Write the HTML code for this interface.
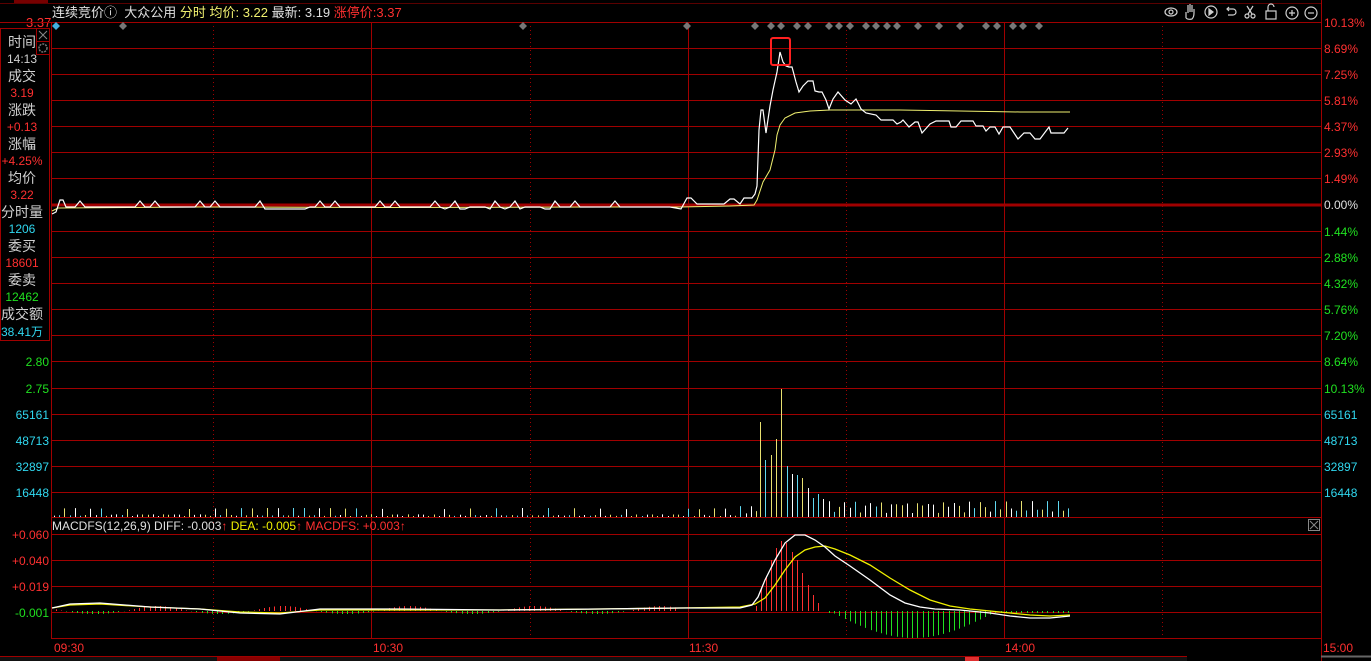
<!DOCTYPE html>
<html><head><meta charset="utf-8"><style>
html,body{margin:0;padding:0;background:#000;width:1371px;height:661px;overflow:hidden}
svg{display:block}
text{font-family:"Liberation Sans","Noto Sans CJK SC",sans-serif}
</style></head><body>
<svg id="s" width="1371" height="661" viewBox="0 0 1371 661" xmlns="http://www.w3.org/2000/svg">
<rect width="1371" height="661" fill="#000"/>
<line x1="0" y1="3.5" x2="1321" y2="3.5" stroke="#5a0000"/>
<rect x="14" y="0" width="34" height="3" fill="#700"/>
<text x="52" y="17" font-size="13" fill="#e0e0e0">连续竞价ⓘ&#160;&#160;大众公用 <tspan fill="#f0f070">分时 均价</tspan><tspan fill="#f0f070">: 3.22</tspan> 最新<tspan fill="#e0e0e0">: 3.19</tspan> <tspan fill="#ff3030">涨停价:3.37</tspan></text>
<text x="26" y="27" font-size="13" fill="#ff3030">3.37</text>
<g stroke="#d0d0d0" fill="none" stroke-width="1.2">
<ellipse cx="1171" cy="12" rx="6" ry="4"/><circle cx="1171" cy="12" r="2"/>
<path d="M1186 18 v-6 M1188 13 v-8 M1190 12 v-8 M1192 12 v-7 M1194 13 v-4 M1186 18 q2 2 6 1 q2-2 2-6"/>
<circle cx="1211" cy="12" r="6"/><path d="M1209 9 l4 3 -4 3z" fill="#d0d0d0"/>
<path d="M1227 9 h6 a3 3 0 0 1 0 6 h-5 M1229 7 l-2 2 2 2"/>
<circle cx="1247" cy="16" r="2"/><circle cx="1253" cy="16" r="2"/><path d="M1248 14 l5 -8 M1252 14 l-5 -8"/>
<rect x="1266" y="11" width="10" height="8"/><path d="M1268 11 v-4 a3 3 0 0 1 6 0"/>
<circle cx="1292" cy="13" r="6"/><path d="M1289 13 h6 M1292 10 v6"/>
<circle cx="1311" cy="13" r="6"/><path d="M1308 13 h6"/>
</g>
<rect x="0.5" y="28.5" width="49" height="312" fill="none" stroke="#a00000"/>
<rect x="36.5" y="28.5" width="13" height="13" fill="none" stroke="#a00000"/>
<path d="M39 31 l8 8 M47 31 l-8 8" stroke="#888"/>
<rect x="36.5" y="41.5" width="13" height="13" fill="none" stroke="#a00000"/>
<circle cx="43" cy="48" r="4" fill="none" stroke="#777" stroke-width="1.5" stroke-dasharray="2 1"/>
<g font-size="14" fill="#d0d0d0" text-anchor="middle">
<text x="22" y="47">时间</text><text x="22" y="81">成交</text><text x="22" y="115">涨跌</text><text x="22" y="149">涨幅</text><text x="22" y="183">均价</text><text x="22" y="217">分时量</text><text x="22" y="251">委买</text><text x="22" y="285">委卖</text><text x="22" y="319">成交额</text>
</g>
<g font-size="12" text-anchor="middle">
<text x="22" y="63" fill="#d0d0d0">14:13</text><text x="22" y="97" fill="#ff3030">3.19</text><text x="22" y="131" fill="#ff3030">+0.13</text><text x="22" y="165" fill="#ff3030">+4.25%</text><text x="22" y="199" fill="#ff3030">3.22</text><text x="22" y="233" fill="#30d8f0">1206</text><text x="22" y="267" fill="#ff3030">18601</text><text x="22" y="301" fill="#20e020">12462</text><text x="22" y="336" fill="#30d8f0">38.41万</text>
</g>
<g id="grid" stroke="#a00000" stroke-width="1"></g>
<line x1="51" y1="205" x2="1321" y2="205" stroke="#a00000" stroke-width="3"/>
<line x1="51.5" y1="22" x2="51.5" y2="638" stroke="#a00000"/>
<line x1="1321.5" y1="0" x2="1321.5" y2="661" stroke="#a00000"/>
<g stroke="#a00000" stroke-dasharray="1 3">
<line x1="213.5" y1="22" x2="213.5" y2="638"/><line x1="530.5" y1="22" x2="530.5" y2="638"/><line x1="846.5" y1="22" x2="846.5" y2="638"/><line x1="1162.5" y1="22" x2="1162.5" y2="638"/>
</g>
<g stroke="#a00000"><line x1="371.5" y1="22" x2="371.5" y2="638"/><line x1="688.5" y1="22" x2="688.5" y2="638"/><line x1="1004.5" y1="22" x2="1004.5" y2="638"/></g>
<g font-size="12">
<text x="1324" y="27" fill="#ff3030">10.13%</text><text x="1324" y="53" fill="#ff3030">8.69%</text><text x="1324" y="79" fill="#ff3030">7.25%</text><text x="1324" y="105" fill="#ff3030">5.81%</text><text x="1324" y="131" fill="#ff3030">4.37%</text><text x="1324" y="157" fill="#ff3030">2.93%</text><text x="1324" y="183" fill="#ff3030">1.49%</text><text x="1324" y="209" fill="#e0e0e0">0.00%</text>
<text x="1324" y="236" fill="#20e020">1.44%</text><text x="1324" y="262" fill="#20e020">2.88%</text><text x="1324" y="288" fill="#20e020">4.32%</text><text x="1324" y="314" fill="#20e020">5.76%</text><text x="1324" y="340" fill="#20e020">7.20%</text><text x="1324" y="366" fill="#20e020">8.64%</text><text x="1324" y="393" fill="#20e020">10.13%</text>
<text x="1324" y="419" fill="#30d8f0">65161</text><text x="1324" y="445" fill="#30d8f0">48713</text><text x="1324" y="471" fill="#30d8f0">32897</text><text x="1324" y="497" fill="#30d8f0">16448</text>
<text x="49" y="366" fill="#20e020" text-anchor="end">2.80</text><text x="49" y="393" fill="#20e020" text-anchor="end">2.75</text>
<text x="49" y="419" fill="#30d8f0" text-anchor="end">65161</text><text x="49" y="445" fill="#30d8f0" text-anchor="end">48713</text><text x="49" y="471" fill="#30d8f0" text-anchor="end">32897</text><text x="49" y="497" fill="#30d8f0" text-anchor="end">16448</text>
<text x="49" y="539" fill="#ff3030" text-anchor="end">+0.060</text><text x="49" y="565" fill="#ff3030" text-anchor="end">+0.040</text><text x="49" y="591" fill="#ff3030" text-anchor="end">+0.019</text><text x="49" y="617" fill="#20e020" text-anchor="end">-0.001</text>
<text x="54" y="652" fill="#ff3030">09:30</text><text x="373" y="652" fill="#ff3030">10:30</text><text x="689" y="652" fill="#ff3030">11:30</text><text x="1005" y="652" fill="#ff3030">14:00</text><text x="1323" y="652" fill="#ff3030">15:00</text>
<text x="52" y="530" fill="#e0e0e0">MACDFS(12,26,9) DIFF: -0.003<tspan fill="#ff3030">↑</tspan> <tspan fill="#f0f000">DEA: -0.005</tspan><tspan fill="#ff3030">↑ MACDFS: +0.003↑</tspan></text>
</g>
<rect x="1308.5" y="519.5" width="11" height="11" fill="none" stroke="#888"/><path d="M1310 521 l8 8 M1318 521 l-8 8" stroke="#888"/>
<g id="dia"></g>
<g id="vol"></g>
<g stroke-width="1">
<line x1="760.5" y1="422" x2="760.5" y2="517" stroke="#e8e070"/>
<line x1="765.5" y1="460" x2="765.5" y2="517" stroke="#60d8f0"/>
<line x1="771.5" y1="455" x2="771.5" y2="517" stroke="#e8e070"/>
<line x1="776.5" y1="439" x2="776.5" y2="517" stroke="#e8e070"/>
<line x1="781.5" y1="389" x2="781.5" y2="517" stroke="#e8e070"/>
<line x1="787.5" y1="466" x2="787.5" y2="517" stroke="#60d8f0"/>
<line x1="792.5" y1="474" x2="792.5" y2="517" stroke="#fff"/>
<line x1="797.5" y1="475" x2="797.5" y2="517" stroke="#60d8f0"/>
<line x1="802.5" y1="478" x2="802.5" y2="517" stroke="#e8e070"/>
<line x1="808.5" y1="488" x2="808.5" y2="517" stroke="#fff"/>
<line x1="813.5" y1="498" x2="813.5" y2="517" stroke="#60d8f0"/>
<line x1="818.5" y1="494" x2="818.5" y2="517" stroke="#60d8f0"/>
<line x1="823.5" y1="499" x2="823.5" y2="517" stroke="#fff"/>
</g>
<g id="mb"></g>
<g stroke="#ff3030">
<line x1="756.5" y1="606" x2="756.5" y2="611"/><line x1="761.5" y1="588" x2="761.5" y2="611"/><line x1="766.5" y1="576" x2="766.5" y2="611"/><line x1="771.5" y1="560" x2="771.5" y2="611"/><line x1="776.5" y1="548" x2="776.5" y2="611"/><line x1="781.5" y1="541" x2="781.5" y2="611"/><line x1="786.5" y1="543" x2="786.5" y2="611"/><line x1="792.5" y1="552" x2="792.5" y2="611"/><line x1="797.5" y1="560" x2="797.5" y2="611"/><line x1="802.5" y1="573" x2="802.5" y2="611"/><line x1="808.5" y1="585" x2="808.5" y2="611"/><line x1="813.5" y1="595" x2="813.5" y2="611"/><line x1="818.5" y1="603" x2="818.5" y2="611"/>
</g>
<polyline id="avg" fill="none" stroke="#f0f070" stroke-width="1"/>
<polyline id="price" fill="none" stroke="#fff" stroke-width="1.2"/>
<rect x="771" y="38" width="19" height="27" rx="2" fill="none" stroke="#ff2020" stroke-width="2"/>
<polyline fill="none" stroke="#f0f000" stroke-width="1.3" points="52,608 70,605 100,604 150,607 200,609 240,612 280,613 320,610 400,610 500,610 600,609 680,608 740,607 755,604 765,598 775,585 785,570 795,557 805,550 815,547 825,546 835,549 850,555 870,565 890,578 910,590 930,600 950,606 970,609 990,611 1010,613 1030,615 1050,616 1070,615"/>
<polyline fill="none" stroke="#fff" stroke-width="1.3" points="52,608 70,604 100,603 150,607 200,609 240,613 280,614 320,609 400,609 500,610 600,609 680,608 740,608 752,605 758,597 765,580 775,560 785,543 795,535 805,535 815,540 825,547 835,556 850,566 870,580 890,595 905,603 920,607 935,609 960,610 990,613 1010,616 1030,618 1050,618 1070,616"/>
<rect x="0" y="656" width="1187" height="5" fill="#111"/>
<line x1="0" y1="656.5" x2="1187" y2="656.5" stroke="#a00000"/>
<rect x="217" y="657" width="63" height="4" fill="#8a0000"/>
<rect x="965" y="657" width="14" height="4" fill="#e03030"/>
<line x1="1321" y1="656.5" x2="1371" y2="656.5" stroke="#666" stroke-width="2"/>
</svg>
<script>
var NS="http://www.w3.org/2000/svg";
function el(p,t,a){var e=document.createElementNS(NS,t);for(var k in a)e.setAttribute(k,a[k]);document.getElementById(p).appendChild(e);return e;}
[22,48,74,100,126,152,178,231,257,283,309,335,361,388,414,440,466,492,517,534,560,586,612,638].forEach(function(y){el('grid','line',{x1:51,y1:y+.5,x2:1321,y2:y+.5});});
el('grid','line',{x1:0,y1:22.5,x2:51,y2:22.5});
[123,523,687,755,771,781,797,808,829,839,850,866,876,887,897,918,939,960,986,997,1013,1023,1039].forEach(function(x){el('dia','path',{d:'M'+x+' 22 l4 4 -4 4 -4 -4z',fill:'#777'});});
el('dia','path',{d:'M56 22 l4 4 -4 4 -4 -4z',fill:'#40b0e0'});
var p=[[52,214],[56,212],[60,200],[63,200],[66,207]];
for(var i=0;i<121;i++){var px=70+i*5;var yy=207;var r=Math.sin(px*0.37)*Math.sin(px*0.053);if(r>0.55)yy=201;if(px>260&&px<310)yy=209;if(px>440&&px<560&&r<-0.3)yy=209;p.push([px,yy]);}
p=p.concat([[681,209],[687,198],[691,198],[697,204],[724,204],[730,199],[734,199],[740,204],[744,198],[752,198],[755,194],[757,186],[759,130],[761,110],[763,110],[766,133],[770,106],[773,90],[777,72],[780,52],[783,62],[786,66],[789,67],[792,67],[796,82],[799,92],[803,86],[808,81],[813,81],[815,91],[819,92],[822,92],[826,100],[829,109],[833,99],[838,92],[845,100],[851,104],[856,99],[861,109],[866,113],[876,115],[881,120],[893,120],[897,124],[901,122],[903,120],[909,127],[915,122],[918,122],[922,133],[930,124],[936,121],[949,121],[951,127],[956,127],[961,121],[973,121],[976,126],[983,126],[986,131],[990,127],[995,127],[999,134],[1003,127],[1010,127],[1018,139],[1024,133],[1030,133],[1035,139],[1040,139],[1046,131],[1049,127],[1051,133],[1059,133],[1064,133],[1068,128]]);
document.getElementById('price').setAttribute('points',p.map(function(a){return a.join(',')}).join(' '));
document.getElementById('avg').setAttribute('points','52,211 58,208 200,207 400,207.5 600,207 680,207 730,206 754,205 757,200 763,182 770,170 775,150 777,135 780,125 785,118 795,113 810,111 830,110 860,110 900,110 960,111 1020,112 1070,112');
var cols=['#fff','#60d8f0','#e8e070'];
for(var j=0;j<196;j++){var xi=Math.round(54+j*5.2);if(xi>=757&&xi<=826)continue;var r=(Math.sin(xi*1.7)+1)/2;var c=cols[Math.floor((Math.sin(xi*0.9)+1)*1.49)];var h;
 if(xi>826)h=517-(4+r*12);else if(xi>735)h=517-(3+r*8);else h=517-(1+(r>0.85?r*8:r*2));
 el('vol','line',{x1:xi+.5,y1:h,x2:xi+.5,y2:517,stroke:c});}
for(var j=0;j<47;j++){var xi=Math.round(829+j*5.2);var t=(xi-829)/240;var d=t<0.7?Math.sin(t/0.7*Math.PI)*27:2;el('mb','line',{x1:xi+.5,y1:611,x2:xi+.5,y2:611+Math.max(2,d),stroke:'#20e020'});}
for(var j=0;j<120;j++){var xi=Math.round(56+j*5.2);var r=Math.sin(xi*0.05);el('mb','line',{x1:xi+.5,y1:r>0?611-r*5:611,x2:xi+.5,y2:r>0?611:611-r*3,stroke:r>0?'#ff3030':'#20e020'});}
</script>
</body></html>
